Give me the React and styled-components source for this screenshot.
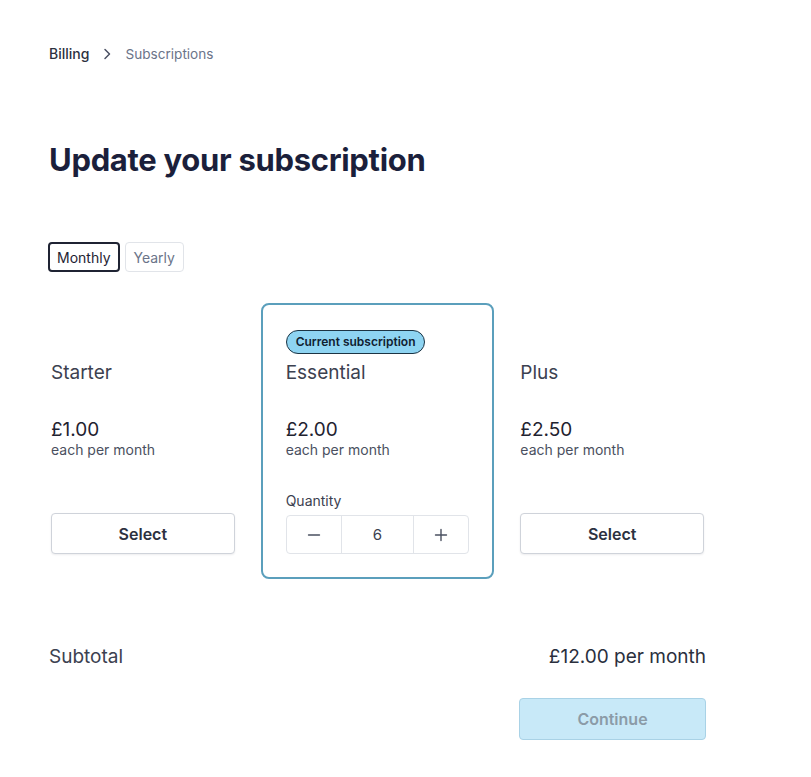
import React, { useState } from "react";
import styled, { createGlobalStyle } from "styled-components";

const GlobalStyle = createGlobalStyle`
  *, *::before, *::after {
    box-sizing: border-box;
  }
  body {
    margin: 0;
    background: #ffffff;
    font-family: Inter, "Noto Sans", sans-serif;
    color: #1f2333;
  }
`;

const Page = styled.div`
  width: 706px;
  padding: 44px 0 36px 49px;
`;

const Breadcrumb = styled.nav`
  display: flex;
  align-items: center;
  gap: 13px;
  font-size: 14px;
  line-height: 20px;
  .current {
    color: #6b7489;
    font-size: 13.6px;
  }
  .root {
    color: #2c3140;
    font-weight: 500;
  }
  svg {
    color: #4a5063;
  }
`;

const Title = styled.h1`
  margin: 78px 0 0;
  font-size: 31px;
  line-height: 36px;
  font-weight: 700;
  color: #1b1f3b;
  letter-spacing: -0.3px;
`;

const Toggle = styled.div`
  display: flex;
  gap: 5px;
  margin: 64px 0 0 -1px;
`;

const ToggleButton = styled.button`
  height: 30px;
  padding: 0 ${p => (p.active ? "7px" : "8px")};
  border-radius: 4px;
  border: ${p => (p.active ? "2px solid #1f2333" : "1px solid #e1e4e9")};
  background: #fff;
  font-family: inherit;
  font-size: 14px;
  color: ${p => (p.active ? "#1f2333" : "#6b7489")};
  cursor: pointer;
`;

const Plans = styled.div`
  display: grid;
  grid-template-columns: repeat(3, 1fr);
  column-gap: 47px;
  align-items: end;
  margin-top: 31px;
`;

const Plan = styled.div`
  display: flex;
  flex-direction: column;
  padding: ${p => (p.current ? "25px 23px 23px" : "0 2px 25px")};
  margin: ${p => (p.current ? "0 -23px" : "0")};
  border: ${p => (p.current ? "2px solid #5b9fbc" : "none")};
  border-radius: 8px;
`;

const Badge = styled.span`
  align-self: flex-start;
  padding: 0 9px;
  height: 24px;
  line-height: 22px;
  border-radius: 12px;
  border: 1px solid #1c3444;
  background: #8ed4f2;
  color: #102030;
  font-size: 12px;
  font-weight: 600;
  margin-bottom: 7px;
`;

const PlanName = styled.div`
  font-size: 19px;
  line-height: 24px;
  color: #3c4150;
`;

const Price = styled.div`
  margin-top: 34px;
  font-size: 19px;
  line-height: 22px;
  color: #1f2330;
`;

const Per = styled.div`
  font-size: 14px;
  line-height: 18px;
  color: #4a5060;
`;

const SelectButton = styled.button`
  margin-top: 54px;
  height: 41px;
  width: 100%;
  border: 1px solid #cfd3da;
  border-radius: 4px;
  background: #fff;
  font-family: inherit;
  font-size: 16px;
  font-weight: 600;
  color: #2c3140;
  box-shadow: 0 1px 2px rgba(20, 30, 50, 0.08);
  cursor: pointer;
`;

const QtyLabel = styled.div`
  margin-top: 33px;
  font-size: 14px;
  line-height: 18px;
  color: #3c4150;
`;

const Stepper = styled.div`
  display: grid;
  grid-template-columns: 54px 1fr 55px;
  height: 39px;
  margin-top: 5px;
  border: 1px solid #e1e4e9;
  border-radius: 4px;
  > * + * {
    border-left: 1px solid #e1e4e9;
  }
`;

const StepCell = styled.div`
  display: flex;
  align-items: center;
  justify-content: center;
  font-size: 15px;
  color: #3c4150;
`;

const Summary = styled.div`
  display: flex;
  justify-content: space-between;
  align-items: center;
  margin-top: 66px;
  font-size: 19px;
  line-height: 24px;
  color: #3c4150;
  .amount {
    color: #2a2f3d;
  }
`;

const Actions = styled.div`
  display: flex;
  justify-content: flex-end;
  margin-top: 29px;
`;

const ContinueButton = styled.button`
  width: 187px;
  height: 42px;
  border: 1px solid #a9d2e6;
  border-radius: 4px;
  background: #c8e9f8;
  font-family: inherit;
  font-size: 16px;
  font-weight: 600;
  color: #8b9ba7;
`;

const plans = [
  { id: "starter", name: "Starter", price: "£1.00" },
  { id: "essential", name: "Essential", price: "£2.00", current: true },
  { id: "plus", name: "Plus", price: "£2.50" }
];

const Chevron = () => (
  <svg width="10" height="12" viewBox="0 0 10 12" fill="none">
    <path d="M3 1.5 L7.5 6 L3 10.5" stroke="currentColor" strokeWidth="1.5" strokeLinecap="round" strokeLinejoin="round" />
  </svg>
);

const Minus = () => (
  <svg width="14" height="14" viewBox="0 0 14 14">
    <path d="M1.5 7 H12.5" stroke="#4a5060" strokeWidth="1.4" strokeLinecap="round" />
  </svg>
);

const Plus = () => (
  <svg width="14" height="14" viewBox="0 0 14 14">
    <path d="M1.5 7 H12.5 M7 1.5 V12.5" stroke="#4a5060" strokeWidth="1.4" strokeLinecap="round" />
  </svg>
);

export default function App() {
  const [period, setPeriod] = useState("monthly");
  const qty = 6;

  return (
    <>
      <GlobalStyle />
      <Page>
        <Breadcrumb>
          <span className="root">Billing</span>
          <Chevron />
          <span className="current">Subscriptions</span>
        </Breadcrumb>

        <Title>Update your subscription</Title>

        <Toggle>
          <ToggleButton active={period === "monthly"} onClick={() => setPeriod("monthly")}>
            Monthly
          </ToggleButton>
          <ToggleButton active={period === "yearly"} onClick={() => setPeriod("yearly")}>
            Yearly
          </ToggleButton>
        </Toggle>

        <Plans>
          {plans.map(plan => (
            <Plan key={plan.id} current={plan.current}>
              {plan.current && <Badge>Current subscription</Badge>}
              <PlanName>{plan.name}</PlanName>
              <Price>{plan.price}</Price>
              <Per>each per month</Per>
              {plan.current ? (
                <>
                  <QtyLabel>Quantity</QtyLabel>
                  <Stepper>
                    <StepCell><Minus /></StepCell>
                    <StepCell>{qty}</StepCell>
                    <StepCell><Plus /></StepCell>
                  </Stepper>
                </>
              ) : (
                <SelectButton>Select</SelectButton>
              )}
            </Plan>
          ))}
        </Plans>

        <Summary>
          <span>Subtotal</span>
          <span className="amount">£12.00 per month</span>
        </Summary>

        <Actions>
          <ContinueButton disabled>Continue</ContinueButton>
        </Actions>
      </Page>
    </>
  );
}
